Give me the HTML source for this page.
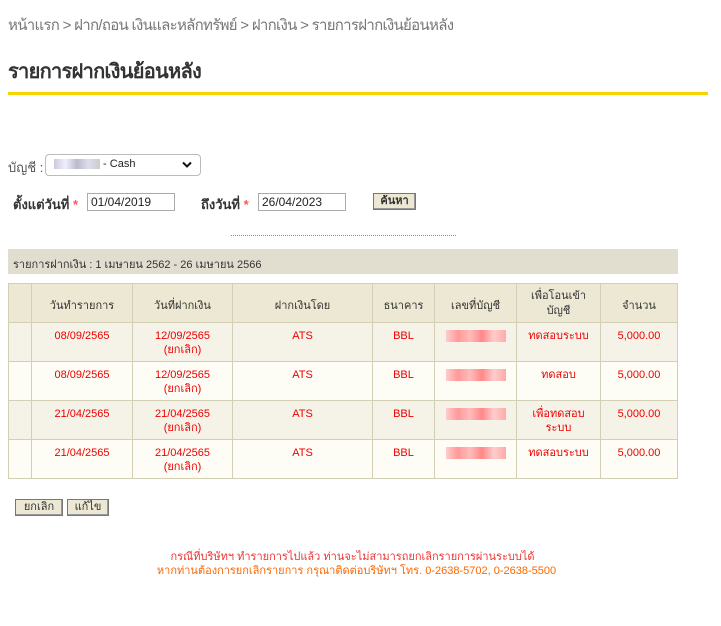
<!DOCTYPE html>
<html><head><meta charset="utf-8">
<style>
*{margin:0;padding:0;box-sizing:border-box}
body{width:721px;height:626px;background:#fff;font-family:"Liberation Sans","Noto Sans CJK SC",sans-serif;position:relative;overflow:hidden;color:#333}
.abs{position:absolute}
.bc{left:8px;top:13px;font-size:15px;color:#777;letter-spacing:-0.7px}
.title{left:8px;top:55px;font-size:20px;font-weight:bold;color:#333;letter-spacing:-0.7px}
.yl{left:8px;top:92px;width:700px;height:3px;background:#f7d300}
.lbl{font-size:13px;color:#555}
.sel{left:45px;top:154px;width:156px;height:22px;border:1px solid #bbb;border-radius:4px;font-size:11px;color:#222;padding:3px 0 0 8px}
.blur{display:inline-block;width:46px;height:10px;background:linear-gradient(90deg,#ccd,#eef,#bbc,#dde,#ccc);vertical-align:middle}
.b{font-size:13px;font-weight:bold;color:#333}
.star{color:#f55}
.inp{height:18px;border:1px solid #aaa;font-size:12px;padding:1px 0 0 3px;color:#222}
.btn{border:1px solid #777;background:#ede8d4;font-size:11px;color:#333;text-align:center;height:17px;line-height:15px;box-shadow:inset -1px -1px #999}
.dash{left:231px;top:235px;width:225px;border-top:1px dotted #888}
.band{left:8px;top:249px;width:670px;height:25px;background:#e1ded0;font-size:11px;color:#333;padding:6px 0 0 5px}
table{position:absolute;left:8px;top:283px;width:670px;border-collapse:collapse;font-size:11px}
td,th{border:1px solid #d3cfb4;text-align:center;vertical-align:top;padding-top:12px}
th{background:#ede8d4;font-weight:normal;color:#333;height:39px;padding-top:12px;vertical-align:top}
td{height:39px;color:#e00;line-height:14px;padding-top:6px}
tr.o td{background:#f5f2e8}
tr.e td{background:#fdfdf5}
.rb{display:inline-block;width:60px;height:12px;background:linear-gradient(90deg,#fcc,#f99,#fbb,#f88,#fcc,#faa);vertical-align:middle}
.note{left:0;width:721px;text-align:center;font-size:11px;line-height:14px}
</style></head><body>
<div class="abs bc">หน้าแรก &gt; ฝาก/ถอน เงินและหลักทรัพย์ &gt; ฝากเงิน &gt; รายการฝากเงินย้อนหลัง</div>
<div class="abs title">รายการฝากเงินย้อนหลัง</div>
<div class="abs yl"></div>
<div class="abs lbl" style="left:8px;top:157px">บัญชี :</div>
<div class="abs sel"><span class="blur"></span> - Cash<svg style="position:absolute;right:8px;top:6px" width="10" height="7" viewBox="0 0 10 7"><path d="M1 1.5L5 5.5L9 1.5" stroke="#111" stroke-width="2" fill="none"/></svg></div>
<div class="abs b" style="left:13px;top:194px">ตั้งแต่วันที่ <span class="star">*</span></div>
<div class="abs inp" style="left:87px;top:193px;width:88px">01/04/2019</div>
<div class="abs b" style="left:201px;top:194px">ถึงวันที่ <span class="star">*</span></div>
<div class="abs inp" style="left:258px;top:193px;width:88px">26/04/2023</div>
<div class="abs btn" style="left:373px;top:193px;width:43px;font-weight:bold">ค้นหา</div>
<div class="abs dash"></div>
<div class="abs band">รายการฝากเงิน : 1 เมษายน 2562 - 26 เมษายน 2566</div>
<table>
<tr><th style="width:23px"></th><th style="width:101px">วันทำรายการ</th><th style="width:100px">วันที่ฝากเงิน</th><th style="width:140px">ฝากเงินโดย</th><th style="width:62px">ธนาคาร</th><th style="width:82px">เลขที่บัญชี</th><th style="width:84px;padding-top:5px;line-height:15px">เพื่อโอนเข้า<br>บัญชี</th><th>จำนวน</th></tr>
<tr class="o"><td></td><td>08/09/2565</td><td>12/09/2565<br>(ยกเลิก)</td><td>ATS</td><td>BBL</td><td><span class="rb"></span></td><td>ทดสอบระบบ</td><td>5,000.00</td></tr>
<tr class="e"><td></td><td>08/09/2565</td><td>12/09/2565<br>(ยกเลิก)</td><td>ATS</td><td>BBL</td><td><span class="rb"></span></td><td>ทดสอบ</td><td>5,000.00</td></tr>
<tr class="o"><td></td><td>21/04/2565</td><td>21/04/2565<br>(ยกเลิก)</td><td>ATS</td><td>BBL</td><td><span class="rb"></span></td><td>เพื่อทดสอบ<br>ระบบ</td><td>5,000.00</td></tr>
<tr class="e"><td></td><td>21/04/2565</td><td>21/04/2565<br>(ยกเลิก)</td><td>ATS</td><td>BBL</td><td><span class="rb"></span></td><td>ทดสอบระบบ</td><td>5,000.00</td></tr>
</table>
<div class="abs btn" style="left:15px;top:499px;width:48px">ยกเลิก</div>
<div class="abs btn" style="left:67px;top:499px;width:42px">แก้ไข</div>
<div class="abs note" style="top:550px;color:#e33;left:-8px">กรณีที่บริษัทฯ ทำรายการไปแล้ว ท่านจะไม่สามารถยกเลิกรายการผ่านระบบได้</div>
<div class="abs note" style="top:564px;color:#f60;left:-4px">หากท่านต้องการยกเลิกรายการ กรุณาติดต่อบริษัทฯ โทร. 0-2638-5702, 0-2638-5500</div>
</body></html>
